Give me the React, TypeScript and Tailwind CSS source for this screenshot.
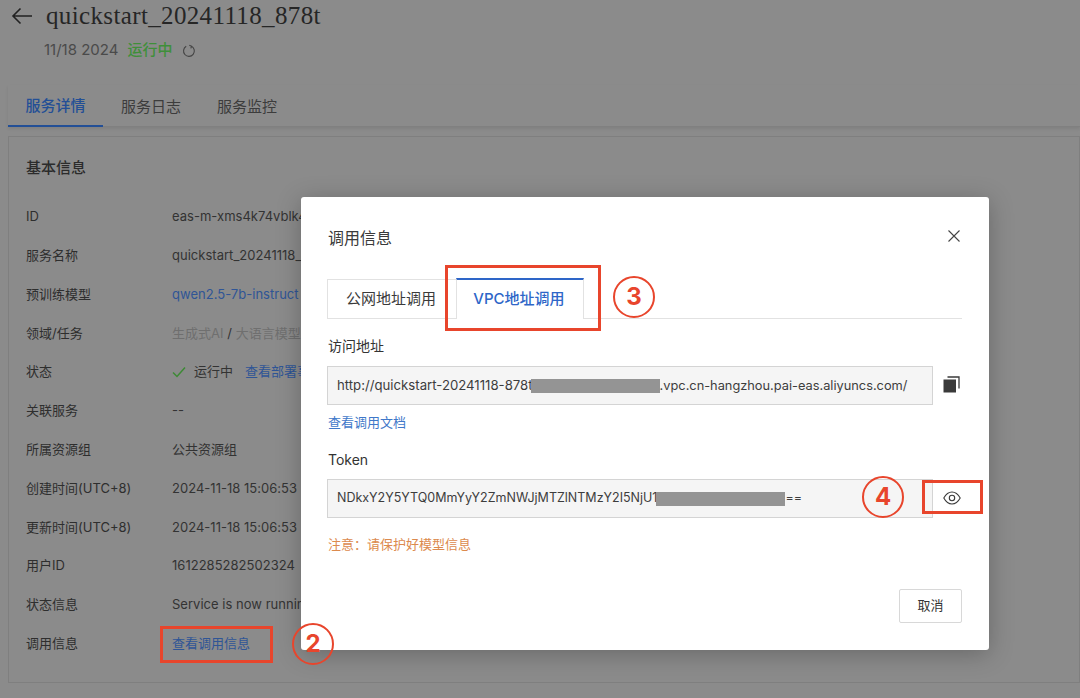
import React from "react";

const sans = "font-['Inter','Noto_Sans_CJK_SC',sans-serif]";

const rows: { label: string; value: React.ReactNode }[] = [
  { label: "ID", value: "eas-m-xms4k74vblk4" },
  { label: "服务名称", value: "quickstart_20241118_878t" },
  { label: "预训练模型", value: <span className="text-[#2f5596]">qwen2.5-7b-instruct</span> },
  {
    label: "领域/任务",
    value: (
      <span className="text-[#6f6f6f]">
        生成式AI <span className="text-[#333]">/</span> 大语言模型
      </span>
    ),
  },
  {
    label: "状态",
    value: (
      <span className="flex items-center">
        <svg width="14" height="12" viewBox="0 0 14 12" fill="none" stroke="#3d8a35" strokeWidth="1.5" className="mr-2">
          <path d="M1 6.5 5 10.5 13 1.5" />
        </svg>
        <span>运行中</span>
        <span className="ml-3 text-[#2f5596]">查看部署事件</span>
      </span>
    ),
  },
  { label: "关联服务", value: "--" },
  { label: "所属资源组", value: "公共资源组" },
  { label: "创建时间(UTC+8)", value: "2024-11-18 15:06:53" },
  { label: "更新时间(UTC+8)", value: "2024-11-18 15:06:53" },
  { label: "用户ID", value: "1612285282502324" },
  { label: "状态信息", value: "Service is now running" },
  { label: "调用信息", value: <span className="text-[#2f5596]">查看调用信息</span> },
];

function Circle({ n, className }: { n: string; className: string }) {
  return (
    <div
      className={`absolute w-[42px] h-[42px] rounded-full border-[2.5px] border-[#e8452c] flex items-center justify-center text-[#e8452c] text-[24px] font-bold font-['Inter',sans-serif] ${className}`}
    >
      {n}
    </div>
  );
}

export default function App() {
  return (
    <div className={`relative w-[1080px] h-[698px] overflow-hidden bg-[#8b8b8b] text-[13px] text-[#2e2e2e] ${sans}`}>
      {/* page header */}
      <div className="flex items-center h-[32px] pl-[11px]">
        <svg width="22" height="18" viewBox="0 0 22 18" fill="none" stroke="#222" strokeWidth="1.6">
          <path d="M21 9H2M9.5 1.5 2 9l7.5 7.5" />
        </svg>
        <span className="ml-[13px] text-[25px] leading-[30px] tracking-[0.36px] text-[#262626] font-['Liberation_Serif',serif]">
          quickstart_20241118_878t
        </span>
      </div>
      <div className="flex items-center h-[20px] mt-[8px] pl-[44px] text-[15px]">
        <span className="text-[#4a4a4a]">11/18 2024</span>
        <span className="ml-[9px] text-[#3f8f3a] font-medium">运行中</span>
        <svg width="14" height="14" viewBox="0 0 14 14" fill="none" stroke="#444" strokeWidth="1.1" className="ml-[10px] mt-[2px]">
          <path d="M9.5 2.2A5.4 5.4 0 1 1 4.2 2.3" />
          <path d="M7.3 1.2 9.6 2.2 8.8 4.4" />
        </svg>
      </div>

      {/* tabs */}
      <div className="flex mt-[25px] h-[42px] ml-[8px] text-[15px] border-b border-b-[#808080] shadow-[0_2px_3px_rgba(0,0,0,0.08)]">
        <div className="w-[95px] flex items-center justify-center pt-[3px] text-[#234f96] border-b-2 border-[#234f96] h-[42px] font-medium">服务详情</div>
        <div className="w-[96px] flex items-center justify-center pt-[3px] text-[#3c3c3c]">服务日志</div>
        <div className="w-[96px] flex items-center justify-center pt-[3px] text-[#3c3c3c]">服务监控</div>
      </div>

      {/* basic info card */}
      <div className="mt-[9px] ml-[8px] h-[547px] border border-[#7f7f7f] pl-[17px] pt-[21px]">
        <div className="text-[15px] leading-[20px] font-medium text-[#2b2b2b]">基本信息</div>
        <div className="mt-[28px] flex flex-col gap-[16.8px]">
          {rows.map((r) => (
            <div key={r.label} className="flex h-[22px] items-center">
              <div className="w-[146px] shrink-0 whitespace-nowrap">{r.label}</div>
              <div className="whitespace-nowrap tracking-[0.02px] text-[#333]">{r.value}</div>
            </div>
          ))}
        </div>
      </div>

      {/* modal */}
      <div className="absolute left-[301px] top-[197px] w-[688px] h-[453px] bg-white rounded-[3px] shadow-[0_4px_24px_rgba(0,0,0,0.25)] px-[26px] flex flex-col text-[#333]">
        <div className="flex items-center justify-between h-[24px] mt-[29px]">
          <span className="text-[16px] text-[#3a3a3a] ml-[1px]">调用信息</span>
          <svg width="12" height="12" viewBox="0 0 12 12" stroke="#444" strokeWidth="1.1" className="mr-[3px] mt-[-4px]">
            <path d="M.5.5l11 11M11.5.5l-11 11" />
          </svg>
        </div>
        <div className="flex mt-[28px] w-[635px] h-[41px] border-b border-[#e2e2e2] text-[15px]">
          <div className="w-[129px] h-[40px] flex items-center justify-center border border-r-0 border-[#e2e2e2] mt-[1px] pr-[2px] text-[#3a3a3a]">公网地址调用</div>
          <div className="w-[128px] h-[41px] flex items-center justify-center border-x border-[#e2e2e2] border-t-2 border-t-[#2e66c8] bg-white text-[#2e66c8] font-medium pr-[2px]">VPC地址调用</div>
        </div>
        <div className="mt-[17px] text-[14px] leading-[20px] text-[#333] ml-[1px]">访问地址</div>
        <div className="flex items-center mt-[10px]">
          <div className="w-[606px] h-[39px] bg-[#f5f5f5] border border-[#d4d4d4] flex items-center pl-[9px] text-[13.2px] whitespace-nowrap text-[#3d3d3d]">
            <span>http://quickstart-20241118-878t</span>
            <span className="w-[129px] h-[14px] bg-[#949494] shrink-0 ml-[-2px]" />
            <span className="text-[12.8px]">.vpc.cn-hangzhou.pai-eas.aliyuncs.com/</span>
          </div>
          <svg width="17" height="17" viewBox="0 0 17 17" className="ml-[10px] mt-[-2px]">
            <rect x="0.5" y="3.5" width="12.5" height="13" fill="#3a3a3a" />
            <path d="M4.5 1H16v11.500" fill="none" stroke="#3a3a3a" strokeWidth="1.3" />
          </svg>
        </div>
        <div className="mt-[7px] text-[13px] leading-[20px] text-[#3f78c9] ml-[1px]">查看调用文档</div>
        <div className="mt-[18px] text-[14px] leading-[20px] text-[#333] ml-[1px]">Token</div>
        <div className="flex items-center mt-[9px]">
          <div className="w-[606px] h-[39px] bg-[#f5f5f5] border border-[#d4d4d4] flex items-center pl-[9px] text-[12.5px] whitespace-nowrap text-[#3d3d3d]">
            <span>NDkxY2Y5YTQ0MmYyY2ZmNWJjMTZlNTMzY2I5NjU1</span>
            <span className="w-[129px] h-[14px] bg-[#949494] shrink-0 ml-[-1px]" />
            <span>==</span>
          </div>
          <svg width="18" height="14" viewBox="0 0 18 14" fill="none" stroke="#3a3a3a" strokeWidth="1.1" className="ml-[10px] mt-[-2px]">
            <path d="M.8 7C3 3 5.800 1 9 1s6 2 8.200 6c-2.200 4-5 6-8.200 6S3 11 .8 7Z" />
            <circle cx="9" cy="7" r="2.700" />
          </svg>
        </div>
        <div className="mt-[16px] text-[13px] leading-[20px] text-[#dc8a4e] ml-[1px]">注意：请保护好模型信息</div>
        <div className="flex justify-end w-[635px] mt-[35px]">
          <div className="w-[63px] h-[34px] rounded-[2px] border border-[#d8d8d8] flex items-center justify-center text-[13px] text-[#333]">取消</div>
        </div>
      </div>

      {/* annotations */}
      <div className="absolute left-[160px] top-[626px] w-[113px] h-[37px] border-[3px] border-[#e8452c]" />
      <Circle n="2" className="left-[292px] top-[623px]" />
      <div className="absolute left-[445px] top-[265px] w-[156px] h-[66px] border-[3px] border-[#e8452c]" />
      <Circle n="3" className="left-[613px] top-[276px]" />
      <Circle n="4" className="left-[862px] top-[476px]" />
      <div className="absolute left-[922px] top-[480px] w-[61px] h-[34px] border-[3px] border-[#e8452c]" />
    </div>
  );
}
